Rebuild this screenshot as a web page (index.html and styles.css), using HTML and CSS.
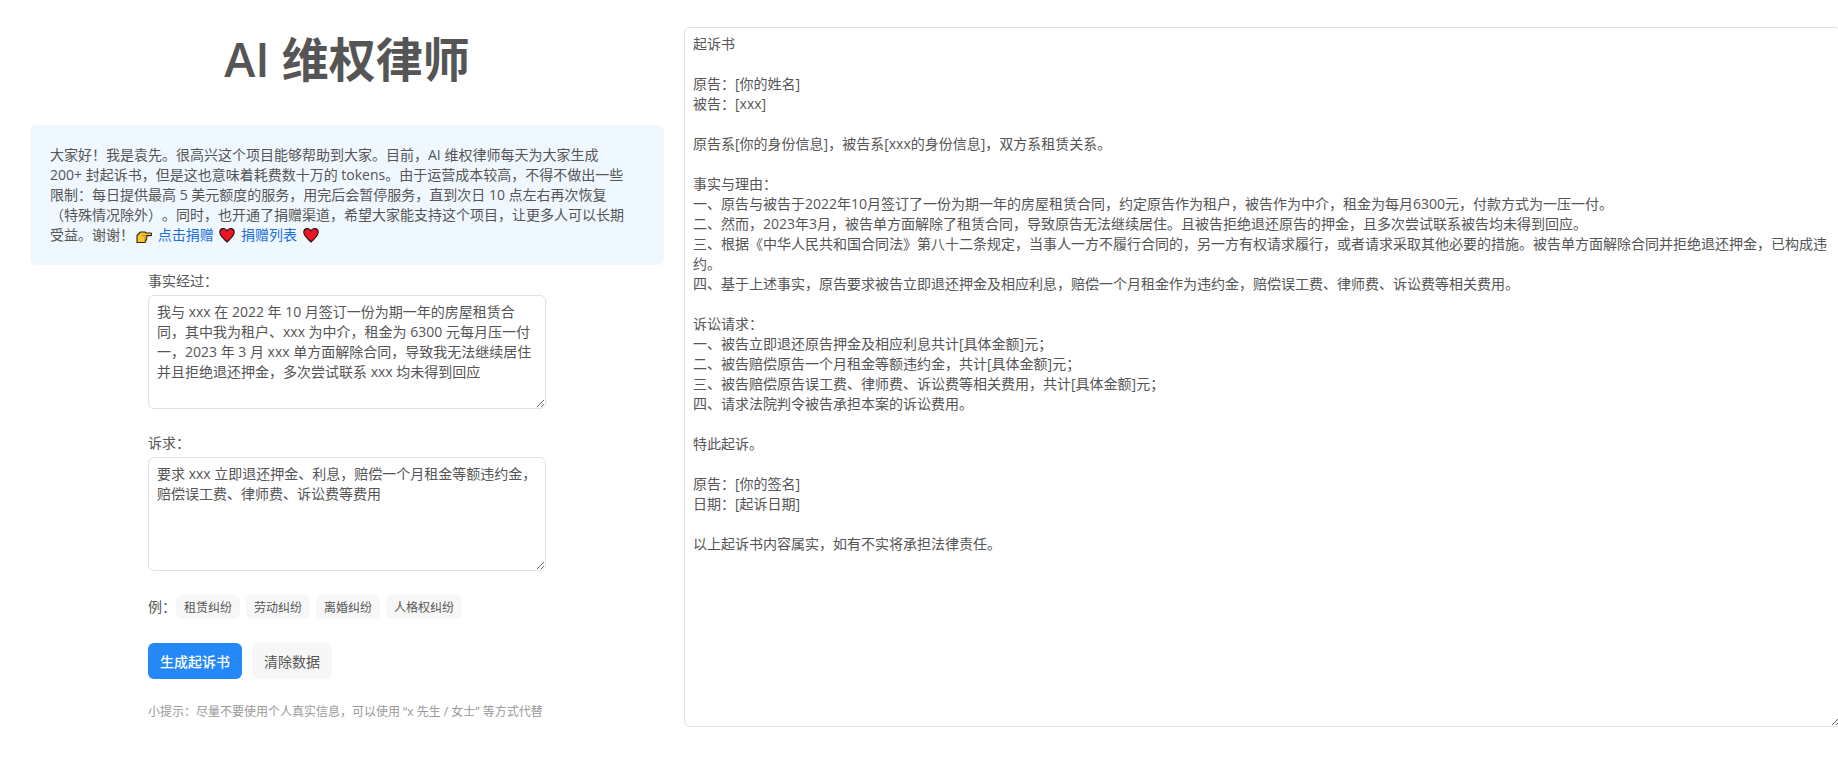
FILE: index.html
```html
<!doctype html>
<html lang="zh-CN">
<head>
  <meta charset="UTF-8">
  <meta name="viewport" content="width=device-width, initial-scale=1">
  <title>AI 维权律师</title>
  <link rel="stylesheet" href="styles.css">
</head>
<body>
  <main class="page">
    <section class="panel">
      <h1 class="title">AI 维权律师</h1>

      <p class="notice">
        大家好！我是袁先。很高兴这个项目能够帮助到大家。目前，AI 维权律师每天为大家生成 200+ 封起诉书，但是这也意味着耗费数十万的 tokens。由于运营成本较高，不得不做出一些限制：每日提供最高 5 美元额度的服务，用完后会暂停服务，直到次日 10 点左右再次恢复（特殊情况除外）。同时，也开通了捐赠渠道，希望大家能支持这个项目，让更多人可以长期受益。谢谢！<svg class="emoji" viewBox="0 0 16 16" aria-hidden="true"><path d="M1 8.500 4.500 5H9l1 1h4.500a1.200 1.200 0 0 1 0 2.600H10.500l.5 1.400-.6 1.200.2 1.300-1 1 .1 1.200-.9.800H1z" fill="#fcc42d" stroke="#2b2317" stroke-width="1.100" stroke-linejoin="round"/><path d="M5.500 8.500h5M8 10.800h2.500M8 12.900h1.800" fill="none" stroke="#a8761c" stroke-width=".8"/></svg>
        <a href="#">点击捐赠</a>
        <svg class="emoji" viewBox="0 0 16 16" aria-hidden="true"><path d="M8 15C5 12 .8 9 .8 5.300.8 1 6 .2 8 3.800 10 .2 15.200 1 15.200 5.300 15.200 9 11 12 8 15z" fill="#eb1526" stroke="#2a1115" stroke-width="1.100"/></svg>
        <a href="#">捐赠列表</a>
        <svg class="emoji" viewBox="0 0 16 16" aria-hidden="true"><path d="M8 15C5 12 .8 9 .8 5.300.8 1 6 .2 8 3.800 10 .2 15.200 1 15.200 5.300 15.200 9 11 12 8 15z" fill="#eb1526" stroke="#2a1115" stroke-width="1.100"/></svg>
      </p>

      <form class="form">
        <div class="field">
          <label for="facts">事实经过：</label>
          <textarea id="facts" class="textarea" rows="5">我与 xxx 在 2022 年 10 月签订一份为期一年的房屋租赁合同，其中我为租户、xxx 为中介，租金为 6300 元每月压一付一，2023 年 3 月 xxx 单方面解除合同，导致我无法继续居住并且拒绝退还押金，多次尝试联系 xxx 均未得到回应</textarea>
        </div>

        <div class="field">
          <label for="claims">诉求：</label>
          <textarea id="claims" class="textarea" rows="5">要求 xxx 立即退还押金、利息，赔偿一个月租金等额违约金，赔偿误工费、律师费、诉讼费等费用</textarea>
        </div>

        <div class="examples">
          <span class="examples-label">例：</span>
          <button type="button" class="tag">租赁纠纷</button>
          <button type="button" class="tag">劳动纠纷</button>
          <button type="button" class="tag">离婚纠纷</button>
          <button type="button" class="tag">人格权纠纷</button>
        </div>

        <div class="actions">
          <button type="button" class="btn btn-primary">生成起诉书</button>
          <button type="button" class="btn">清除数据</button>
        </div>

        <p class="tip">小提示：尽量不要使用个人真实信息，可以使用 “x 先生 / 女士” 等方式代替</p>
      </form>
    </section>

    <section class="result">
      <textarea class="textarea output" aria-label="起诉书">起诉书

原告：[你的姓名]
被告：[xxx]

原告系[你的身份信息]，被告系[xxx的身份信息]，双方系租赁关系。

事实与理由：
一、原告与被告于2022年10月签订了一份为期一年的房屋租赁合同，约定原告作为租户，被告作为中介，租金为每月6300元，付款方式为一压一付。
二、然而，2023年3月，被告单方面解除了租赁合同，导致原告无法继续居住。且被告拒绝退还原告的押金，且多次尝试联系被告均未得到回应。
三、根据《中华人民共和国合同法》第八十二条规定，当事人一方不履行合同的，另一方有权请求履行，或者请求采取其他必要的措施。被告单方面解除合同并拒绝退还押金，已构成违约。
四、基于上述事实，原告要求被告立即退还押金及相应利息，赔偿一个月租金作为违约金，赔偿误工费、律师费、诉讼费等相关费用。

诉讼请求：
一、被告立即退还原告押金及相应利息共计[具体金额]元；
二、被告赔偿原告一个月租金等额违约金，共计[具体金额]元；
三、被告赔偿原告误工费、律师费、诉讼费等相关费用，共计[具体金额]元；
四、请求法院判令被告承担本案的诉讼费用。

特此起诉。

原告：[你的签名]
日期：[起诉日期]

以上起诉书内容属实，如有不实将承担法律责任。</textarea>
    </section>
  </main>
</body>
</html>
```

FILE: styles.css
```css
* {
  margin: 0;
  padding: 0;
  box-sizing: border-box;
}

body {
  background: #fff;
  color: #555;
  font-family: "Open Sans", "Noto Sans CJK SC", sans-serif;
  font-size: 14px;
  line-height: 20px;
  text-spacing-trim: space-all;
  overflow-x: hidden;
}

/* the result box runs slightly past the right edge */
.page {
  display: grid;
  grid-template-columns: 354fr 646fr;
  gap: 20px;
  margin-right: -3px;
  padding: 27px 0 27px 30px;
}

.panel {
  display: flex;
  flex-direction: column;
  align-items: center;
}

.title {
  margin-bottom: 34px;
  font-size: 47px;
  font-weight: 600;
  line-height: 64px;
}

.notice {
  width: 100%;
  padding: 20px 32px 20px 20px;
  border-radius: 6px;
  background: #f0f8ff;
}

.notice a {
  display: inline-block;
  color: #1c6fdc;
  text-decoration: none;
}

.emoji {
  width: 16px;
  height: 16px;
  margin: 0 2px;
  vertical-align: -3px;
}

.form {
  display: flex;
  flex-direction: column;
  gap: 24px;
  width: 398px;
  max-width: 100%;
  margin-top: 6px;
}

.field {
  display: flex;
  flex-direction: column;
  gap: 4px;
}

.textarea {
  display: block;
  width: 100%;
  padding: 6px 8px;
  border: 1px solid #e0e0e0;
  border-radius: 6px;
  background: #fff;
  color: inherit;
  font: inherit;
  outline: none;
  resize: both;
  text-spacing-trim: inherit;
}

.output {
  height: 700px;
}

.examples {
  display: flex;
  align-items: center;
  gap: 6px;
}

.examples-label {
  width: 22px;
  white-space: nowrap;
}

.tag {
  height: 24px;
  padding: 0 8px;
  border: none;
  border-radius: 6px;
  background: #f7f7f8;
  color: inherit;
  font-family: inherit;
  font-size: 12px;
  cursor: pointer;
}

.actions {
  display: flex;
  gap: 10px;
}

.btn {
  height: 36px;
  padding: 0 12px;
  border: none;
  border-radius: 6px;
  background: #f7f7f8;
  color: inherit;
  font-family: inherit;
  font-size: 14px;
  cursor: pointer;
}

.btn-primary {
  background: #2488f8;
  color: #fff;
  font-weight: 500;
}

.tip {
  color: #999;
  font-size: 12px;
  line-height: 18px;
}

@media (max-width: 1000px) {
  .page {
    grid-template-columns: 1fr;
    margin-right: 0;
    padding: 20px;
  }
}
```
